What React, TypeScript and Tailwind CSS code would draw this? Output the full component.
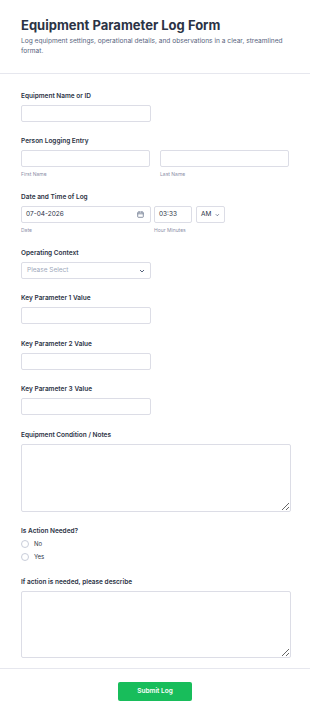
import React from 'react';

const font = { fontFamily: 'Inter, "Noto Sans", sans-serif' };

const Label: React.FC<{ children: React.ReactNode }> = ({ children }) => (
  <div className="text-[6.5px] leading-[10px] font-semibold text-[#2c3345] mb-[4px]">{children}</div>
);

const Sub: React.FC<{ children: React.ReactNode }> = ({ children }) => (
  <div className="text-[5px] leading-[8px] text-[#8d8fa8] mt-[3px]">{children}</div>
);

const Box: React.FC<{ className?: string; children?: React.ReactNode }> = ({ className = '', children }) => (
  <div className={`h-[17px] border border-[#dcdde6] rounded-[2px] bg-white flex items-center ${className}`}>{children}</div>
);

const Chevron = () => (
  <svg width="6" height="4" viewBox="0 0 6 4" fill="none" stroke="#57647e" strokeWidth="1">
    <path d="M1 1l2 2 2-2" />
  </svg>
);

const App: React.FC = () => {
  return (
    <div className="w-[310px] bg-white" style={font}>
      {/* header */}
      <div className="px-[21px] pt-[16px] pb-[17px] border-b border-[#e6e7ee]">
        <h1 className="text-[13px] leading-[18px] font-bold text-[#2c3345]">
          Equipment Parameter Log Form
        </h1>
        <p className="text-[6.6px] leading-[9.5px] text-[#57647e] mt-[3px]">
          Log equipment settings, operational details, and observations in a clear, streamlined format.
        </p>
      </div>

      <div className="px-[21px] pt-[17px]">
        <div>
          <Label>Equipment Name or ID</Label>
          <Box className="w-[130px]" />
        </div>

        <div className="mt-[14px]">
          <Label>Person Logging Entry</Label>
          <div className="flex gap-[10px]">
            <div className="w-[130px]">
              <Box />
              <Sub>First Name</Sub>
            </div>
            <div className="w-[130px]">
              <Box />
              <Sub>Last Name</Sub>
            </div>
          </div>
        </div>

        <div className="mt-[14px]">
          <Label>Date and Time of Log</Label>
          <div className="flex gap-[3px]">
            <div className="w-[130px]">
              <Box className="justify-between pl-[4px] pr-[6px]">
                <span className="text-[6.5px] text-[#2c3345]">07-04-2026</span>
                <svg width="7" height="7" viewBox="0 0 10 10" fill="none" stroke="#57647e" strokeWidth="1">
                  <rect x="1" y="1.5" width="8" height="7.5" rx="1" />
                  <path d="M1 4h8M3 0.5v2M7 0.5v2" />
                </svg>
              </Box>
              <Sub>Date</Sub>
            </div>
            <div className="w-[38px]">
              <Box className="px-[4px]">
                <span className="text-[6.5px] text-[#2c3345]">03:33</span>
              </Box>
              <Sub>Hour Minutes</Sub>
            </div>
            <div className="w-[29px] ml-[1px]">
              <Box className="px-[4px] gap-[4px]">
                <span className="text-[6.5px] text-[#2c3345]">AM</span>
                <Chevron />
              </Box>
            </div>
          </div>
        </div>

        <div className="mt-[14px]">
          <Label>Operating Context</Label>
          <Box className="w-[130px] justify-between px-[5px]">
            <span className="text-[6.5px] text-[#a0a7ba]">Please Select</span>
            <Chevron />
          </Box>
        </div>

        <div className="mt-[14px]">
          <Label>Key Parameter 1 Value</Label>
          <Box className="w-[130px]" />
        </div>

        <div className="mt-[15px]">
          <Label>Key Parameter 2 Value</Label>
          <Box className="w-[130px]" />
        </div>

        <div className="mt-[14px]">
          <Label>Key Parameter 3 Value</Label>
          <Box className="w-[130px]" />
        </div>

        <div className="mt-[15px]">
          <Label>Equipment Condition / Notes</Label>
          <textarea className="block w-[270px] h-[68px] border border-[#dcdde6] rounded-[2px] outline-none" />
        </div>

        <div className="mt-[14px]">
          <Label>Is Action Needed?</Label>
          <div className="flex flex-col gap-[5px] mt-[4px]">
            {['No', 'Yes'].map((o) => (
              <div key={o} className="flex items-center gap-[5px]">
                <div className="w-[8px] h-[8px] rounded-full border border-[#c8cdd9] bg-white" />
                <span className="text-[6px] leading-[8px] text-[#2c3345]">{o}</span>
              </div>
            ))}
          </div>
        </div>

        <div className="mt-[16px]">
          <Label>If action is needed, please describe</Label>
          <textarea className="block w-[270px] h-[67px] border border-[#dcdde6] rounded-[2px] outline-none" />
        </div>
      </div>

      <div className="mt-[10px] border-t border-[#e6e7ee] pt-[13px] pb-[17px] flex justify-center">
        <button className="w-[74px] h-[19px] rounded-[2px] bg-[#18bd5b] text-white text-[6.5px] font-semibold">
          Submit Log
        </button>
      </div>
    </div>
  );
};

export default App;
